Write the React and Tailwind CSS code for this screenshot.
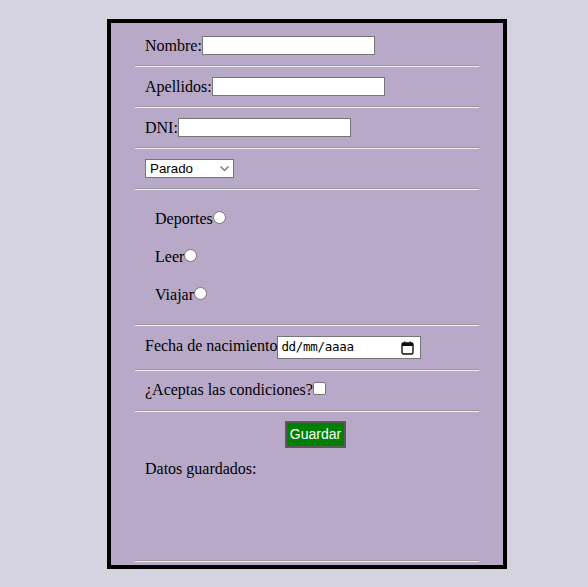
import { useState } from 'react';

const serif = { fontFamily: '"Liberation Serif", "Times New Roman", serif' };

function Rule() {
  return <div className="h-[2px] border-t border-b border-t-[#9a9a9a] border-b-[#eeeeee]" />;
}

function TextField({ label, value, onChange }) {
  return (
    <div className="flex h-[39px] items-center pl-[10px]">
      <label className="text-[16px] leading-[18px]">{label}</label>
      <input
        type="text"
        value={value}
        onChange={(e) => onChange(e.target.value)}
        className="h-[19px] w-[173px] border border-[#767676] bg-white px-[2px] text-[13px] outline-none"
        style={{ fontFamily: '"Liberation Sans", Arial, sans-serif' }}
      />
    </div>
  );
}

function Radio({ label, name, checked, onChange }) {
  return (
    <div className="flex items-baseline text-[16px] leading-[18px]">
      <span>{label}</span>
      <input
        type="radio"
        name={name}
        checked={checked}
        onChange={onChange}
        className="h-[13px] w-[13px] appearance-none rounded-full border border-[#767676] bg-white checked:border-[4px] checked:border-[#0075ff]"
      />
    </div>
  );
}

export default function App() {
  const [nombre, setNombre] = useState('');
  const [apellidos, setApellidos] = useState('');
  const [dni, setDni] = useState('');
  const [situacion, setSituacion] = useState('Parado');
  const [aficion, setAficion] = useState('');
  const [acepta, setAcepta] = useState(false);
  const [guardado, setGuardado] = useState('');

  const guardar = () => {
    setGuardado([nombre, apellidos, dni, situacion, aficion].filter(Boolean).join(', '));
  };

  return (
    <div className="min-h-screen bg-[#d6d3e1] pl-[107px] pt-[19px] text-black" style={serif}>
      <div className="h-[550px] w-[400px] border-4 border-black bg-[#b8a9c9] px-[24px]">
        <div className="pt-[3px]">
          <TextField label="Nombre:" value={nombre} onChange={setNombre} />
        </div>
        <Rule />
        <TextField label="Apellidos:" value={apellidos} onChange={setApellidos} />
        <Rule />
        <TextField label="DNI:" value={dni} onChange={setDni} />
        <Rule />
        <div className="flex h-[39px] items-center pl-[10px]">
          <div className="relative h-[19px] w-[89px]">
            <select
              value={situacion}
              onChange={(e) => setSituacion(e.target.value)}
              className="block h-[19px] w-full appearance-none border border-[#767676] bg-white py-0 pl-[4px] text-[13.33px] leading-[normal] outline-none"
              style={{ fontFamily: '"Liberation Sans", Arial, sans-serif' }}
            >
              <option>Parado</option>
              <option>Trabajando</option>
              <option>Estudiando</option>
            </select>
            <svg className="pointer-events-none absolute right-[5px] top-[7px]" width="9" height="5" viewBox="0 0 9 5">
              <path d="M0.5 0.5 L4.5 4.5 L8.5 0.5" fill="none" stroke="#6b6b6b" strokeWidth="1.2" />
            </svg>
          </div>
        </div>
        <Rule />
        <div className="flex h-[134px] flex-col gap-[20px] pl-[20px] pt-[20px]">
          <Radio label="Deportes" name="aficion" checked={aficion === 'Deportes'} onChange={() => setAficion('Deportes')} />
          <Radio label="Leer" name="aficion" checked={aficion === 'Leer'} onChange={() => setAficion('Leer')} />
          <Radio label="Viajar" name="aficion" checked={aficion === 'Viajar'} onChange={() => setAficion('Viajar')} />
        </div>
        <Rule />
        <div className="flex h-[43px] items-start pl-[10px] pt-[10px]">
          <span className="mt-[1px] text-[16px] leading-[18px]">Fecha de nacimiento</span>
          <div className="flex h-[23px] w-[144px] items-center justify-between border border-[#767676] bg-white pl-[3px] pr-[6px]">
            <span className="text-[12.5px] tracking-[-0.3px]" style={{ fontFamily: '"DejaVu Sans Mono", monospace' }}>dd/mm/aaaa</span>
            <svg width="13" height="14" viewBox="0 0 13 14">
              <rect x="1" y="2" width="11" height="11" rx="1.5" fill="none" stroke="#111" strokeWidth="1.4" />
              <rect x="1" y="2" width="11" height="3" fill="#111" />
              <rect x="3" y="0.5" width="1.4" height="2.5" fill="#111" />
              <rect x="8.6" y="0.5" width="1.4" height="2.5" fill="#111" />
            </svg>
          </div>
        </div>
        <Rule />
        <div className="flex h-[39px] items-baseline pl-[10px] pt-[10px] text-[16px] leading-[18px]">
          <span>¿Aceptas las condiciones?</span>
          <input
            type="checkbox"
            checked={acepta}
            onChange={(e) => setAcepta(e.target.checked)}
            className="h-[13px] w-[13px] appearance-none rounded-[2px] border border-[#767676] bg-white checked:bg-[#0075ff]"
          />
        </div>
        <Rule />
        <div className="h-[148px] pt-[9px]">
          <div className="flex justify-center pl-[17px]">
            <button
              onClick={guardar}
              className="h-[27px] w-[61px] border-2 border-[#5a5a5a] bg-[#008000] text-[14px] text-white"
              style={{ fontFamily: '"Liberation Sans", Arial, sans-serif' }}
            >
              Guardar
            </button>
          </div>
          <p className="mt-[12px] pl-[10px] text-[16px] leading-[18px]">Datos guardados: {guardado}</p>
        </div>
        <Rule />
      </div>
    </div>
  );
}
